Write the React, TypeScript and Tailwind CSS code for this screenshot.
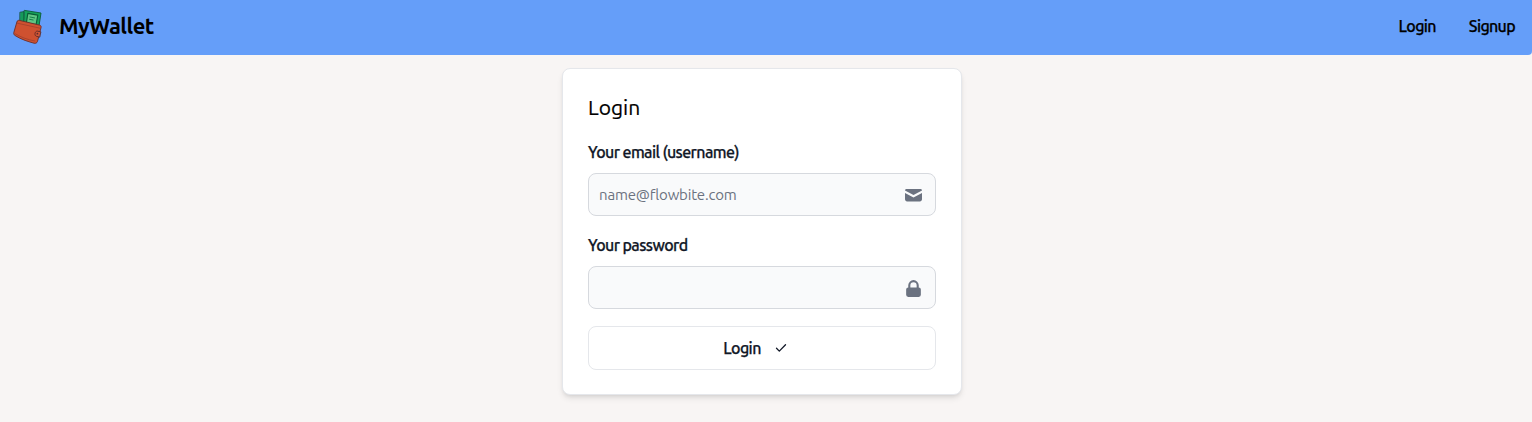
import React from "react";
import { HiLockClosed } from "react-icons/hi";

function WalletLogo() {
  return (
    <svg viewBox="0 0 32 36" className="h-9 w-8 shrink-0" strokeLinejoin="round" strokeLinecap="round">
      <path d="M8.2 3.2 12 2.6 13 16 8 13Z" fill="#159a5a" stroke="#10523c" strokeWidth="0.8" />
      <path d="m12.6 1.400 16.400 2.600-2 13-15-2.600Z" fill="#16a35b" stroke="#0b5a35" strokeWidth="0.9" />
      <path d="m15.8 4.4 10 1.700-1.700 9.400-9.700-1.700Z" fill="#5fc583" stroke="#075b35" strokeWidth="1.1" />
      <path d="m18 8 4.6.9M17.500 10.300l3.6.7" fill="none" stroke="#17804b" strokeWidth="1" />
      <path
        d="M5 12.600c.4-1.200 1.300-1.500 2.500-1.200l20 4.700c1.200.3 1.800 1 1.600 2.300l-3.600 14c-.4 1.600-2 2.200-3.500 1.800C17.500 33 9 30.500 3 26.500c-1.200-.8-1.500-1.700-1.200-2.900Z"
        fill="#cf5130"
        stroke="#6b2f2b"
        strokeWidth="0.9"
      />
      <path d="m5.300 14.200 22.800 5M3.300 24.800c5.500 3.400 12 5.800 19.500 7.200" fill="none" stroke="#9b3c2b" strokeWidth="0.7" />
      <path
        d="m28.500 22.800-3.300-.7c-1.300.1-2 1.200-2.200 2.500-.2 1.400.5 2.400 1.700 2.800l2.700.7Z"
        fill="#d45635"
        stroke="#5d2927"
        strokeWidth="0.9"
      />
      <circle cx="25.400" cy="24.700" r="0.900" fill="#5d2927" />
    </svg>
  );
}

function MailIcon() {
  return (
    <svg viewBox="0 0 21 21" fill="currentColor" className="h-[21px] w-[21px] text-[#6b7280]">
      <path d="M2 5.400C2 4.500 2.900 4 4.100 4h12.800C18.100 4 19 4.500 19 5.400L10.500 9.900Z" />
      <path d="M2 8 10.500 12.600 19 8v6.300c0 1.200-.9 2.100-2.100 2.100H4.100C2.900 16.400 2 15.500 2 14.300Z" />
    </svg>
  );
}

function Field({
  label,
  type,
  placeholder,
  icon,
}: {
  label: string;
  type: string;
  placeholder?: string;
  icon: React.ReactNode;
}) {
  return (
    <label className="block">
      <span className="block h-6 w-max text-[16px] leading-6 font-medium tracking-[-0.6px] text-[#111827] [-webkit-text-stroke:0.25px]">{label}</span>
      <span className="mt-[9px] flex h-[43px] items-center rounded-lg border border-[#d6d9de] bg-[#f9fafb] pt-px pr-[11px] pl-[10px]">
        <input
          type={type}
          placeholder={placeholder}
          className="min-w-0 flex-1 bg-transparent text-[15px] tracking-[-0.18px] text-[#111827] outline-none placeholder:text-[#6b7280]"
        />
        {icon}
      </span>
    </label>
  );
}

export default function App() {
  return (
    <div className="min-h-screen bg-[#f8f5f4] font-['Ubuntu','Noto_Sans',sans-serif] text-black">
      <nav className="flex h-[55px] items-center justify-between rounded-br bg-[#659ef9] pr-[17px] pb-[2px] pl-3">
        <a className="flex items-center" href="#">
          <WalletLogo />
          <span className="-mt-[2px] ml-[15px] text-[22px] leading-7 font-bold tracking-[-0.5px]">MyWallet</span>
        </a>
        <div className="-mt-[2px] flex gap-[33px] text-[16px] leading-5 font-medium tracking-[-0.65px] [-webkit-text-stroke:0.25px]">
          <a href="#">Login</a>
          <a href="#">Signup</a>
        </div>
      </nav>
      <main className="mt-[13px] flex justify-center pr-2">
        <form className="h-[327px] w-[400px] rounded-lg border border-[#e5e7eb] bg-white px-[25px] pt-[23px] shadow-md">
          <h1 className="h-8 text-[21px] leading-[31px] [-webkit-text-stroke:0.2px]">Login</h1>
          <div className="mt-4">
            <Field
              label="Your email (username)"
              type="email"
              placeholder="name@flowbite.com"
              icon={<MailIcon />}
            />
          </div>
          <div className="mt-[17px]">
            <Field
              label="Your password"
              type="password"
              icon={<HiLockClosed className="h-[21px] w-[21px] text-[#6b7280]" />}
            />
          </div>
          <button
            type="button"
            className="mt-[17px] flex h-[44px] w-full items-center justify-center rounded-lg border border-[#e5e7eb] bg-white pr-[14px] text-[16px] font-medium text-[#111827]"
          >
            <span className="tracking-[-0.6px] [-webkit-text-stroke:0.25px]">Login</span>
            <svg viewBox="0 0 12 10" className="ml-[14px] h-[10px] w-3" fill="none" stroke="currentColor" strokeWidth="1.3" strokeLinecap="round" strokeLinejoin="round">
              <path d="m1.500 5.300 2.800 2.800 6.200-6.300" />
            </svg>
          </button>
        </form>
      </main>
    </div>
  );
}
